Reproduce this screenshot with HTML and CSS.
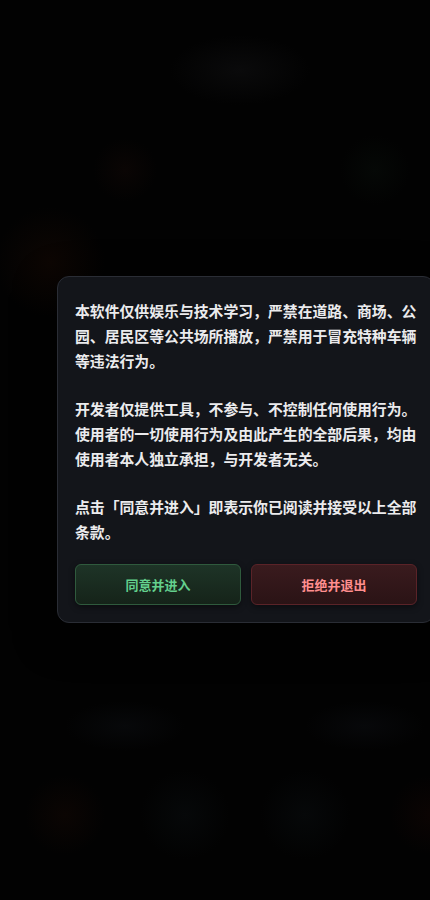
FILE: index.html
```html
<!DOCTYPE html>
<html lang="zh-CN">
<head>
<meta charset="utf-8">
<meta name="viewport" content="width=device-width, initial-scale=1">
<title>使用须知</title>
<link rel="stylesheet" href="styles.css">
</head>
<body>
<div class="backdrop">
  <div class="modal" role="dialog" aria-modal="true">
    <p class="para">本软件仅供娱乐与技术学习，严禁在道路、商场、公园、居民区等公共场所播放，严禁用于冒充特种车辆等违法行为。</p>
    <p class="para">开发者仅提供工具，不参与、不控制任何使用行为。使用者的一切使用行为及由此产生的全部后果，均由使用者本人独立承担，与开发者无关。</p>
    <p class="para">点击「同意并进入」即表示你已阅读并接受以上全部条款。</p>
    <div class="actions">
      <button class="btn btn-agree" type="button">同意并进入</button>
      <button class="btn btn-reject" type="button">拒绝并退出</button>
    </div>
  </div>
</div>
</body>
</html>
```

FILE: styles.css
```css
html, body {
  margin: 0;
  padding: 0;
}

body {
  width: 430px;
  min-height: 900px;
  overflow: hidden;
  font-family: "Noto Sans CJK SC", "Noto Sans", sans-serif;
  background-color: #020202;
  background-image:
    radial-gradient(ellipse 70px 35px at 240px 70px, #0a0a0b 0%, rgba(10,10,11,0) 100%),
    radial-gradient(circle 32px at 125px 170px, #0a0504 0%, rgba(10,5,4,0) 100%),
    radial-gradient(circle 35px at 375px 170px, #050806 0%, rgba(5,8,6,0) 100%),
    radial-gradient(circle 55px at 50px 262px, #0d0603 0%, rgba(13,6,3,0) 100%),
    radial-gradient(ellipse 60px 25px at 125px 726px, #07080a 0%, rgba(7,8,10,0) 100%),
    radial-gradient(ellipse 60px 25px at 365px 726px, #07080a 0%, rgba(7,8,10,0) 100%),
    radial-gradient(circle 40px at 65px 815px, #0b0503 0%, rgba(11,5,3,0) 100%),
    radial-gradient(circle 45px at 185px 815px, #060809 0%, rgba(6,8,9,0) 100%),
    radial-gradient(circle 45px at 305px 815px, #060809 0%, rgba(6,8,9,0) 100%),
    radial-gradient(circle 40px at 430px 815px, #0b0403 0%, rgba(11,4,3,0) 100%);
}

.backdrop {
  padding: 276px 0 0 57px;
}

.modal {
  box-sizing: border-box;
  width: 378px;
  padding: 21px 17px 17px 17px;
  background: #13151a;
  border: 1px solid #2a2d35;
  border-radius: 12px;
  box-shadow: 0 12px 40px rgba(0, 0, 0, 0.6);
}

.para {
  margin: 0 0 23px 0;
  font-size: 14.85px;
  line-height: 25px;
  font-weight: 700;
  color: #ebebed;
  letter-spacing: 0;
}

.para:last-of-type {
  margin-bottom: 0;
}

.actions {
  display: flex;
  gap: 10px;
  margin-top: 20px;
}

.btn {
  flex: 1 1 0;
  height: 41px;
  border-radius: 6px;
  font-family: "Noto Sans CJK SC", "Noto Sans", sans-serif;
  font-size: 13px;
  font-weight: 700;
  cursor: pointer;
  box-shadow: 0 2px 6px rgba(0, 0, 0, 0.45);
}

.btn-agree {
  color: #63d08d;
  background: linear-gradient(180deg, #1e3427 0%, #152319 100%);
  border: 1px solid #2f5a3d;
}

.btn-reject {
  color: #ff8e8e;
  background: linear-gradient(180deg, #3a1b1e 0%, #2a1315 100%);
  border: 1px solid #5a2328;
}
```
